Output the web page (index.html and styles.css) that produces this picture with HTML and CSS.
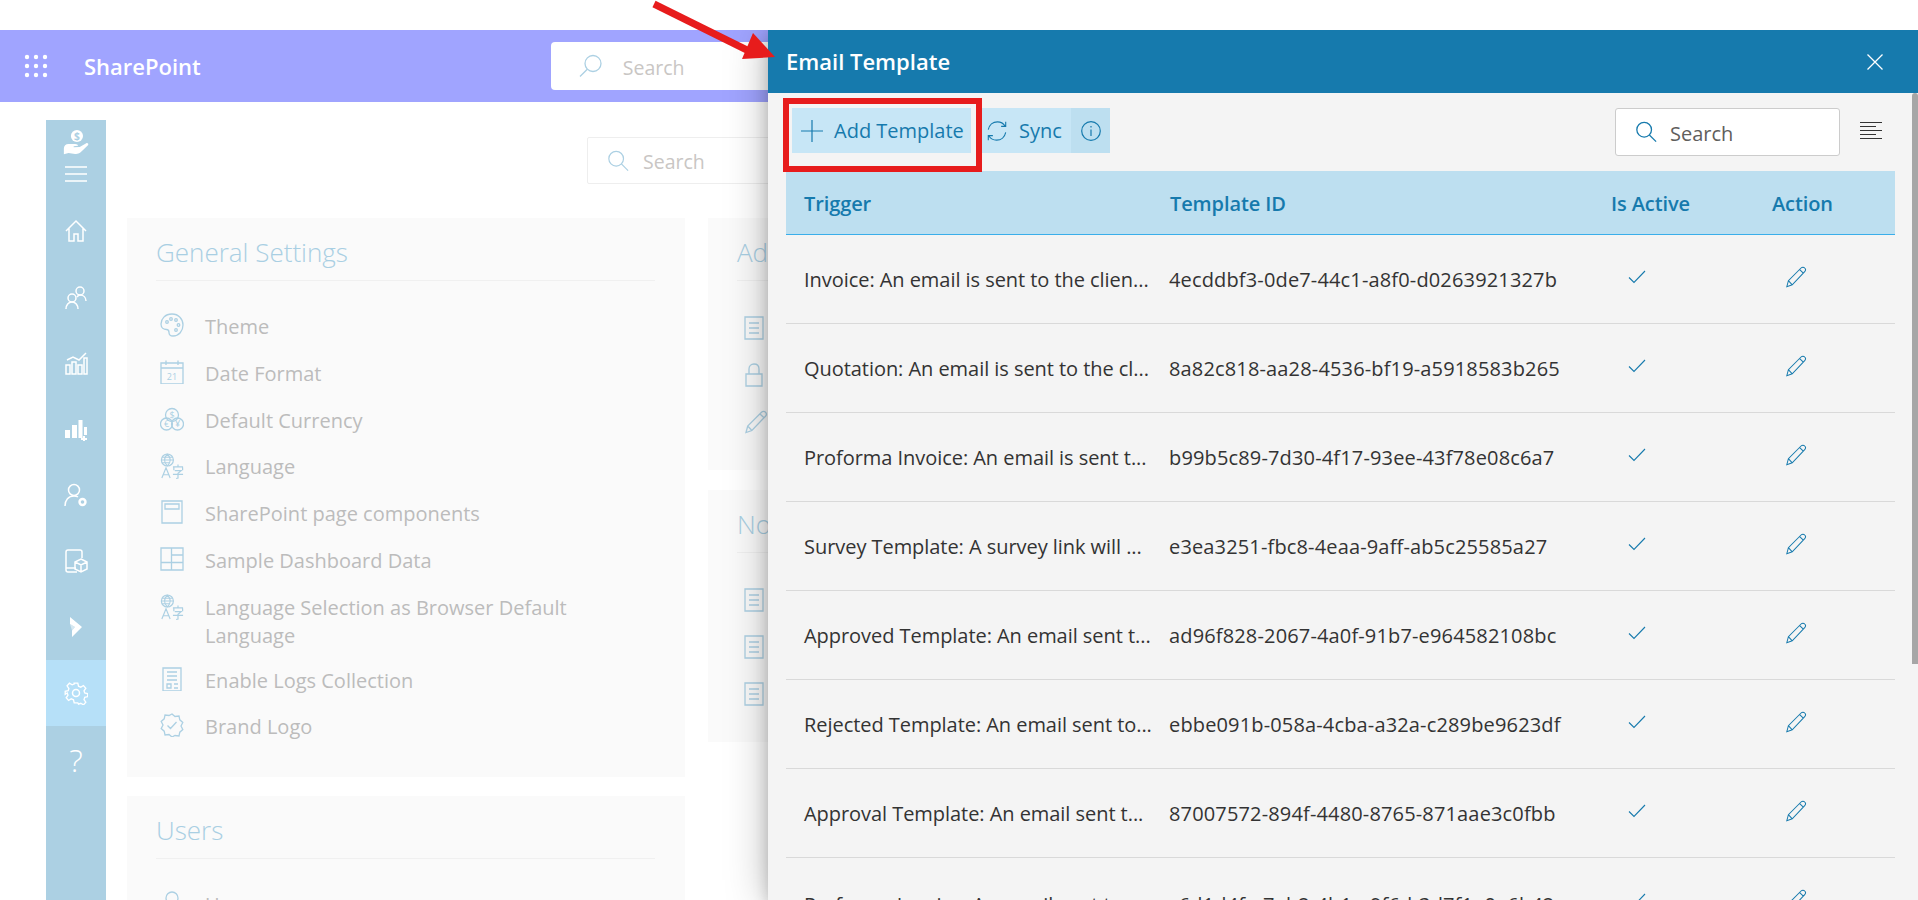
FILE: index.html
```html
<!DOCTYPE html>
<html lang="en">
<head>
    <meta charset="UTF-8">
    <meta name="viewport" content="width=device-width, initial-scale=1.0">
    <title>Email Template</title>
    <link rel="stylesheet" href="styles.css">
</head>
<body>
    <svg class="defs" width="0" height="0">
        <symbol id="i-search" viewBox="0 0 24 24"><circle cx="10" cy="9.500" r="8"/><path d="M15.700 15.200 23 22.500"/></symbol>
        <symbol id="i-doc" viewBox="0 0 20 24"><path d="M1 1h18v22H1zM5 7h10M5 12h10M5 17h10"/></symbol>
        <symbol id="i-lang" viewBox="0 0 26 28"><circle cx="8" cy="7.500" r="6.500"/><path d="M1.500 7.500h13M8 1c-4 4-4 9 0 13M8 1c4 4 4 9 0 13M2.500 4.500h11M2.500 10.500h8M2 27l4.500-11 4.500 11M3.500 23.500h6M14 15h11M19.500 12.500V15M15 18.500v-3M24.500 18.500v-3M16 19h7l-3.500 3v5l-2 .5M14 23h11"/></symbol>
        <symbol id="i-pencil" viewBox="0 0 24 24"><path d="M2 22.500 3.700 16 17.500 2.200c1.200-1.200 3-1.200 4 0 1.100 1.100 1.100 2.800 0 4L7.900 20.500zM3.700 16l4.200 4.500M16 4l4.300 4"/></symbol>
        <symbol id="i-check" viewBox="0 0 18 14"><path d="M1 7.500 6 12.500 17 1"/></symbol>
    </svg>

    <div class="top-strip"></div>

    <div class="app">
        <header class="suite-bar">
            <svg class="waffle" viewBox="0 0 24 24" width="24" height="24" fill="#fff">
                <circle cx="3" cy="3" r="2.200"/><circle cx="12" cy="3" r="2.200"/><circle cx="21" cy="3" r="2.200"/>
                <circle cx="3" cy="12" r="2.200"/><circle cx="12" cy="12" r="2.200"/><circle cx="21" cy="12" r="2.200"/>
                <circle cx="3" cy="21" r="2.200"/><circle cx="12" cy="21" r="2.200"/><circle cx="21" cy="21" r="2.200"/>
            </svg>
            <span class="brand">SharePoint</span>
            <div class="suite-search">
                <svg class="line-icon flip" width="24" height="24"><use href="#i-search"/></svg>
                <span>Search</span>
            </div>
        </header>

        <div class="page">
            <nav class="sidebar">
                <div class="side-top">
                    <svg viewBox="0 0 28 30" width="28" height="28" fill="#fff">
                        <circle cx="15" cy="7.500" r="6.500"/>
                        <text x="15" y="11.500" text-anchor="middle" class="coin">$</text>
                        <path d="M1 21c0-3 2-5 5-5h7c2 0 3 .8 3.200 2l-4.700.4v1.200l6.500-.2 7-4.200c1.500-.8 3 1 1.800 2.200L19 25c-2 1.500-4 2-6 1.700l-7-1-5 1.300z"/>
                    </svg>
                    <svg viewBox="0 0 22 16" width="22" height="16" class="side-line"><path d="M0 1h22M0 8h22M0 15h22"/></svg>
                </div>
                <a class="side-item"><svg viewBox="0 0 24 24" width="24" height="24" class="side-line"><path d="M2 12 12 2l10 10M5 9.500V22h5v-7h4v7h5V9.500"/></svg></a>
                <a class="side-item"><svg viewBox="0 0 24 24" width="24" height="24" class="side-line"><circle cx="16" cy="6" r="4"/><circle cx="8" cy="13" r="4"/><path d="M2 24c0-4 2.500-7 6-7s6 3 6 7M13 12c.8-1.300 1.700-2 3-2 3.500 0 6 2.500 6 6"/></svg></a>
                <a class="side-item"><svg viewBox="0 0 24 24" width="24" height="24" class="side-line"><path d="M2 14h4v9H2zM8 11h4v12H8zM14 14h4v9h-4zM20 7h3v16h-3zM3 9l6-3 6 3 7-7"/></svg></a>
                <a class="side-item"><svg viewBox="0 0 24 24" width="24" height="24" fill="#fff"><path d="M1 13h5v8H1zM8 8h5v13H8zM14.500 3h4v18h-4zM20 10h3v8h-3z"/><path d="M19 19h2v2h2v2h-2v2h-2v-2h-2v-2h2z"/></svg></a>
                <a class="side-item"><svg viewBox="0 0 24 24" width="24" height="24" class="side-line"><circle cx="10" cy="7" r="5.500"/><path d="M1 23c0-6 3.500-10 9-10 1.500 0 3 .3 4 1"/><circle cx="18.500" cy="19" r="3" stroke-width="2.400"/></svg></a>
                <a class="side-item"><svg viewBox="0 0 24 24" width="24" height="24" class="side-line"><path d="M13 23H4c-1 0-2-1-2-2V3c0-1 1-2 2-2h12c1 0 2 1 2 2v6M2 19h10M17 10l6 3v7l-6 3-6-3v-7zM11 13l6 3 6-3M17 16v7"/></svg></a>
                <a class="side-item"><svg viewBox="0 0 24 24" width="24" height="24" fill="#fff"><path d="M6 2 18 12 8 22V15.500L11 12 6 9z"/><path d="M6 9 11 12 8 15.500z" fill-opacity=".5"/></svg></a>
                <a class="side-item active"><svg viewBox="0 0 24 24" width="24" height="24" class="side-line"><circle cx="12" cy="12" r="3.500"/><path d="M10 1h4l.8 3.500 2.500 1 3-1.800 2.600 3-2 2.900.8 2.400 3.300.8v3.300l-3.300.8-.8 2.400 2 2.900-2.600 3-3-1.800-2.500 1L14 23h-4l-.8-3.500-2.500-1-3 1.800-2.600-3 2-2.900-.8-2.400L-.000 13.500v-3.300l3.300-.8.800-2.400-2-2.900 2.600-3 3 1.800 2.500-1z" transform="translate(1.200 1.200) scale(.9)"/></svg></a>
                <a class="side-item"><span class="help">?</span></a>
            </nav>

            <main class="settings">
                <div class="page-search">
                    <svg class="line-icon" width="22" height="22"><use href="#i-search"/></svg>
                    <span>Search</span>
                </div>
                <div class="columns">
                    <div class="col col-left">
                        <section class="card">
                            <h2>General Settings</h2>
                            <ul class="items">
                                <li><svg class="line-icon" viewBox="0 0 24 24" width="24" height="24"><path d="M12 1C5 1 1 6 1 11c0 4 3 5.500 5.500 5.500 2 0 2.500 1.500 2.500 3 0 2 1.500 3.500 4 3.500 6 0 10-5 10-11S18.500 1 12 1z"/><circle cx="7" cy="9" r="1.300"/><circle cx="11" cy="6" r="1.300"/><circle cx="16" cy="7" r="1.300"/><circle cx="18.500" cy="12" r="1.300"/><circle cx="16" cy="17" r="1.300"/></svg>Theme</li>
                                <li><svg class="line-icon" viewBox="0 0 24 24" width="24" height="24"><path d="M1 3h22v21H1zM1 8h22M6 .500V5M18 .500V5"/><text x="12" y="20" text-anchor="middle" class="cal">21</text></svg>Date Format</li>
                                <li><svg class="line-icon" viewBox="0 0 24 24" width="24" height="24"><circle cx="12" cy="8" r="6.500"/><circle cx="6.500" cy="17" r="6"/><circle cx="17.500" cy="17" r="6"/><text x="12" y="11" text-anchor="middle" class="cur">$</text><text x="6.500" y="20" text-anchor="middle" class="cur">€</text><text x="17.500" y="20" text-anchor="middle" class="cur">¥</text></svg>Default Currency</li>
                                <li><svg class="line-icon" width="24" height="26"><use href="#i-lang"/></svg>Language</li>
                                <li><svg class="line-icon" viewBox="0 0 24 24" width="24" height="24"><path d="M2 1h20v22H2zM5 4h14v5H5z"/></svg>SharePoint page components</li>
                                <li><svg class="line-icon" viewBox="0 0 24 24" width="24" height="24"><path d="M1 1h22v22H1zM1 15.500h22M11.500 1v22M11.500 8H23"/></svg>Sample Dashboard Data</li>
                                <li class="two-line"><svg class="line-icon" width="24" height="26"><use href="#i-lang"/></svg><span class="wrap">Language Selection as Browser Default Language</span></li>
                                <li><svg class="line-icon" viewBox="0 0 24 24" width="24" height="24"><path d="M3 1h18v23H3zM7 5h10M7 9h10M7 13h10M7 17h4v4H7zM14 17h4M14 21h4"/></svg>Enable Logs Collection</li>
                                <li><svg class="line-icon" viewBox="0 0 24 24" width="24" height="24"><path d="M12 1l3 2.500 4-.5.800 3.800 3 2.700-1.800 3.500 1.800 3.500-3 2.700-.8 3.800-4-.5L12 24l-3-2.500-4 .5-.8-3.800-3-2.700L3 12 1.200 8.500l3-2.700L5 2l4 .5zM7.500 12.500l3 3 6-6.500"/></svg>Brand Logo</li>
                            </ul>
                        </section>
                        <section class="card">
                            <h2>Users</h2>
                            <ul class="items">
                                <li><svg class="line-icon" viewBox="0 0 24 24" width="24" height="24"><circle cx="12" cy="7" r="6"/><path d="M2 24c0-6 4-10 10-10s10 4 10 10"/></svg>Users</li>
                            </ul>
                        </section>
                    </div>
                    <div class="col col-right">
                        <section class="card short">
                            <h2>Additional Settings</h2>
                            <ul class="items tight">
                                <li><svg class="line-icon" width="20" height="24"><use href="#i-doc"/></svg></li>
                                <li><svg class="line-icon" viewBox="0 0 20 24" width="20" height="24"><path d="M2 11h16v12H2zM5 11V6c0-3 2-5 5-5s5 2 5 5v5"/></svg></li>
                                <li><svg class="line-icon" viewBox="0 0 24 24" width="24" height="24"><use href="#i-pencil"/></svg></li>
                            </ul>
                        </section>
                        <section class="card short">
                            <h2>Notifications</h2>
                            <ul class="items tight">
                                <li><svg class="line-icon" width="20" height="24"><use href="#i-doc"/></svg></li>
                                <li><svg class="line-icon" width="20" height="24"><use href="#i-doc"/></svg></li>
                                <li><svg class="line-icon" width="20" height="24"><use href="#i-doc"/></svg></li>
                            </ul>
                        </section>
                    </div>
                </div>
            </main>
        </div>

        <aside class="panel">
            <div class="panel-head">
                <h1>Email Template</h1>
                <svg class="close" viewBox="0 0 16 16" width="16" height="16"><path d="M.5.500l15 15M15.500.500l-15 15"/></svg>
            </div>
            <div class="toolbar">
                <button class="tool add">
                    <svg viewBox="0 0 22 22" width="22" height="22"><path d="M11 0v22M0 11h22"/></svg>
                    Add Template
                </button>
                <button class="tool sync">
                    <svg viewBox="0 0 24 24" width="22" height="22"><path d="M2.500 10.500C3.500 5.500 7.500 2 12.500 2c3.500 0 6.500 1.700 8.300 4.500M21.500 13.500c-1 5-5 8.500-10 8.500-3.500 0-6.500-1.700-8.300-4.500M21.500 2v5h-5M2.500 22v-5h5"/></svg>
                    Sync
                </button>
                <button class="tool info">
                    <svg viewBox="0 0 20 20" width="20" height="20"><circle cx="10" cy="10" r="9.300"/><path d="M10 8.500V15M10 5v1.500"/></svg>
                </button>
                <div class="panel-search">
                    <svg class="blue-icon" width="22" height="22"><use href="#i-search"/></svg>
                    <span>Search</span>
                </div>
                <svg class="filter" viewBox="0 0 22 17" width="22" height="17"><path d="M0 .500h22M0 4.500h16M0 8.500h22M0 12.500h16M0 16.500h22"/></svg>
            </div>

            <table>
                <thead>
                    <tr>
                        <th class="c-trigger">Trigger</th>
                        <th class="c-id">Template ID</th>
                        <th class="c-active">Is Active</th>
                        <th class="c-action">Action</th>
                    </tr>
                </thead>
                <tbody>
                    <tr>
                        <td>Invoice: An email is sent to the clien...</td>
                        <td>4ecddbf3-0de7-44c1-a8f0-d0263921327b</td>
                        <td><svg class="chk" width="18" height="14"><use href="#i-check"/></svg></td>
                        <td><svg class="pen" width="22" height="22"><use href="#i-pencil"/></svg></td>
                    </tr>
                    <tr>
                        <td>Quotation: An email is sent to the cl...</td>
                        <td>8a82c818-aa28-4536-bf19-a5918583b265</td>
                        <td><svg class="chk" width="18" height="14"><use href="#i-check"/></svg></td>
                        <td><svg class="pen" width="22" height="22"><use href="#i-pencil"/></svg></td>
                    </tr>
                    <tr>
                        <td>Proforma Invoice: An email is sent t...</td>
                        <td>b99b5c89-7d30-4f17-93ee-43f78e08c6a7</td>
                        <td><svg class="chk" width="18" height="14"><use href="#i-check"/></svg></td>
                        <td><svg class="pen" width="22" height="22"><use href="#i-pencil"/></svg></td>
                    </tr>
                    <tr>
                        <td>Survey Template: A survey link will ...</td>
                        <td>e3ea3251-fbc8-4eaa-9aff-ab5c25585a27</td>
                        <td><svg class="chk" width="18" height="14"><use href="#i-check"/></svg></td>
                        <td><svg class="pen" width="22" height="22"><use href="#i-pencil"/></svg></td>
                    </tr>
                    <tr>
                        <td>Approved Template: An email sent t...</td>
                        <td>ad96f828-2067-4a0f-91b7-e964582108bc</td>
                        <td><svg class="chk" width="18" height="14"><use href="#i-check"/></svg></td>
                        <td><svg class="pen" width="22" height="22"><use href="#i-pencil"/></svg></td>
                    </tr>
                    <tr>
                        <td>Rejected Template: An email sent to...</td>
                        <td>ebbe091b-058a-4cba-a32a-c289be9623df</td>
                        <td><svg class="chk" width="18" height="14"><use href="#i-check"/></svg></td>
                        <td><svg class="pen" width="22" height="22"><use href="#i-pencil"/></svg></td>
                    </tr>
                    <tr>
                        <td>Approval Template: An email sent t...</td>
                        <td>87007572-894f-4480-8765-871aae3c0fbb</td>
                        <td><svg class="chk" width="18" height="14"><use href="#i-check"/></svg></td>
                        <td><svg class="pen" width="22" height="22"><use href="#i-pencil"/></svg></td>
                    </tr>
                    <tr>
                        <td class="cut">Performa Invoice: An email sent t...</td>
                        <td class="cut">c6d1d4fe-7ab2-4b1e-9f6d-3d7f1e0a6b42</td>
                        <td><svg class="chk" width="18" height="14"><use href="#i-check"/></svg></td>
                        <td><svg class="pen" width="22" height="22"><use href="#i-pencil"/></svg></td>
                    </tr>
                </tbody>
            </table>
            <div class="scrollbar"></div>
            <div class="red-box"></div>
        </aside>
    </div>

    <svg class="arrow" viewBox="0 0 130 62" width="130" height="62">
        <path d="M4 4 105 54" stroke="#e71c1c" stroke-width="7"/>
        <path d="M125 57 103 33 92 59z" fill="#e71c1c"/>
    </svg>
</body>
</html>
```

FILE: styles.css
```css
* {
    box-sizing: border-box;
}
html, body {
    margin: 0;
    height: 900px;
    overflow: hidden;
}
body {
    font-family: "Open Sans", "Liberation Sans", sans-serif;
    background-color: white;
    position: relative;
}
.defs {
    position: absolute;
}
.top-strip {
    height: 30px;
    background-color: white;
}
.app {
    height: 870px;
    position: relative;
    overflow: hidden;
}

/* suite bar */
.suite-bar {
    height: 72px;
    background-color: #a0a4ff;
    display: flex;
    align-items: center;
    padding-left: 24px;
}
.brand {
    color: white;
    font-size: 22px;
    font-weight: 600;
    margin-left: 36px;
}
.suite-search {
    width: 400px;
    height: 48px;
    margin-left: 350px;
    background-color: white;
    border-radius: 4px;
    display: flex;
    align-items: center;
    padding-left: 28px;
    gap: 20px;
    font-size: 19.500px;
    color: #c9c6c4;
}
.suite-search span, .page-search span, .panel-search span {
    padding-top: 2px;
}
.line-icon {
    fill: none;
    stroke: #acd0e3;
    stroke-width: 1.3;
    flex: none;
}
.flip {
    transform: scaleX(-1);
}
.cal, .cur {
    fill: #acd0e3;
    stroke: none;
    font-size: 9px;
}

/* left nav */
.page {
    display: flex;
    padding: 18px 0 0 46px;
}
.sidebar {
    width: 60px;
    height: 780px;
    background-color: #acd0e3;
    flex: none;
}
.side-top {
    height: 78px;
    display: flex;
    flex-direction: column;
    align-items: center;
    padding-top: 9px;
    gap: 9px;
}
.side-item {
    height: 66px;
    display: flex;
    align-items: center;
    justify-content: center;
}
.side-item.active {
    background-color: #b6e0f8;
}
.side-line {
    fill: none;
    stroke: white;
    stroke-width: 1.5;
}
.coin {
    fill: #acd0e3;
    font-size: 11px;
    font-weight: 700;
}
.help {
    color: white;
    font-size: 32px;
    font-weight: 300;
}

/* settings */
.settings {
    margin-left: 21px;
    flex: 1;
}
.page-search {
    width: 400px;
    height: 47px;
    margin: 17px 0 34px 460px;
    border: 1px solid #eeeeee;
    border-radius: 2px;
    display: flex;
    align-items: center;
    padding-left: 19px;
    gap: 14px;
    font-size: 19.500px;
    color: #c9c6c4;
}
.columns {
    display: flex;
    gap: 23px;
}
.col {
    display: flex;
    flex-direction: column;
}
.col-left {
    width: 558px;
    gap: 19px;
}
.col-right {
    width: 560px;
    gap: 20px;
}
.card {
    background-color: #fafafa;
    padding: 0 30px 36px 29px;
}
.card.short {
    height: 252px;
}
.card h2 {
    margin: 0;
    height: 63px;
    line-height: 68px;
    font-size: 26px;
    font-weight: 300;
    color: #a9cfe3;
    border-bottom: 1px solid #f0f0f0;
    white-space: nowrap;
}
.items {
    list-style: none;
    margin: 32px 0 0;
    padding: 0;
    display: flex;
    flex-direction: column;
    gap: 18.800px;
    font-size: 20px;
    line-height: 28px;
    color: #bcbcbc;
}
.items.tight {
    margin: 35px 0 0 3px;
    gap: 19px;
}
.items li {
    display: flex;
    gap: 21px;
    padding-left: 4px;
    min-height: 28px;
}
.items .two-line {
    margin-bottom: -2px;
}
.wrap {
    width: 400px;
}

/* panel */
.panel {
    position: absolute;
    top: 0;
    right: 0;
    bottom: 0;
    width: 1150px;
    background-color: #f4f4f4;
    box-shadow: 0 0 40px rgba(0, 0, 0, 0.28), 0 5px 14px rgba(0, 0, 0, 0.18);
    color: #333333;
}
.panel-head {
    height: 63px;
    background-color: #167aad;
    display: flex;
    align-items: center;
    justify-content: space-between;
    padding: 0 35px 0 18px;
}
.panel-head h1 {
    margin: 0;
    color: white;
    font-size: 22px;
    font-weight: 600;
    padding-bottom: 2px;
}
.close {
    fill: none;
    stroke: white;
    stroke-width: 1.3;
}
.toolbar {
    height: 78px;
    display: flex;
    align-items: flex-start;
    padding: 15px 36px 0 24px;
    font-size: 20px;
}
.tool {
    height: 45px;
    border: 0;
    background-color: #c7e6f6;
    color: #167aad;
    font: inherit;
    display: flex;
    align-items: center;
    flex: none;
    cursor: pointer;
}
.tool svg {
    fill: none;
    stroke: #167aad;
    stroke-width: 1.2;
}
.add {
    width: 179px;
    padding-left: 9px;
    gap: 11px;
}
.sync {
    width: 95px;
    margin-left: 5px;
    padding-left: 10px;
    gap: 11px;
}
.info {
    width: 39px;
    justify-content: center;
    background-color: #bddff0;
}
.panel-search {
    width: 225px;
    height: 48px;
    margin-left: auto;
    background-color: white;
    border: 1px solid #cccccc;
    border-radius: 3px;
    display: flex;
    align-items: center;
    padding-left: 19px;
    gap: 13px;
    color: #605e5c;
}
.blue-icon {
    fill: none;
    stroke: #167aad;
    stroke-width: 1.4;
}
.filter {
    margin: 14px 0 0 20px;
    fill: none;
    stroke: #333333;
    stroke-width: 1;
    flex: none;
}
table {
    width: 1109px;
    margin-left: 18px;
    border-collapse: collapse;
    table-layout: fixed;
    font-size: 20px;
}
th {
    height: 63px;
    background-color: #bddff0;
    border-bottom: 1px solid #3aaeea;
    color: #167aad;
    font-weight: 600;
    text-align: left;
    padding: 2px 0 0 19px;
    letter-spacing: -0.1px;
}
th.c-trigger {
    padding-left: 18px;
}
td {
    height: 89px;
    border-bottom: 1px solid #d9d9d9;
    padding: 2px 0 0 18px;
    white-space: nowrap;
    letter-spacing: 0.15px;
    overflow: hidden;
}
td:first-child {
    letter-spacing: -0.05px;
}
td.cut {
    padding-top: 6px;
}
.c-trigger { width: 365px; }
.c-id { width: 441px; }
.c-active { width: 161px; }
.c-action { width: 142px; }
.chk, .pen {
    display: block;
    fill: none;
    stroke: #167aad;
    stroke-width: 1.1;
    margin-top: -6px;
}
.chk {
    margin-left: 18px;
}
.pen {
    margin-left: 14px;
}
.scrollbar {
    position: absolute;
    top: 63px;
    right: 0;
    width: 6px;
    height: 571px;
    background-color: #a6a6a6;
    border-radius: 3px 3px 0 0;
}
.red-box {
    position: absolute;
    left: 15px;
    top: 68px;
    width: 199px;
    height: 74px;
    border: 6px solid #e71c1c;
}

.arrow {
    position: absolute;
    left: 650px;
    top: 0;
}
```
